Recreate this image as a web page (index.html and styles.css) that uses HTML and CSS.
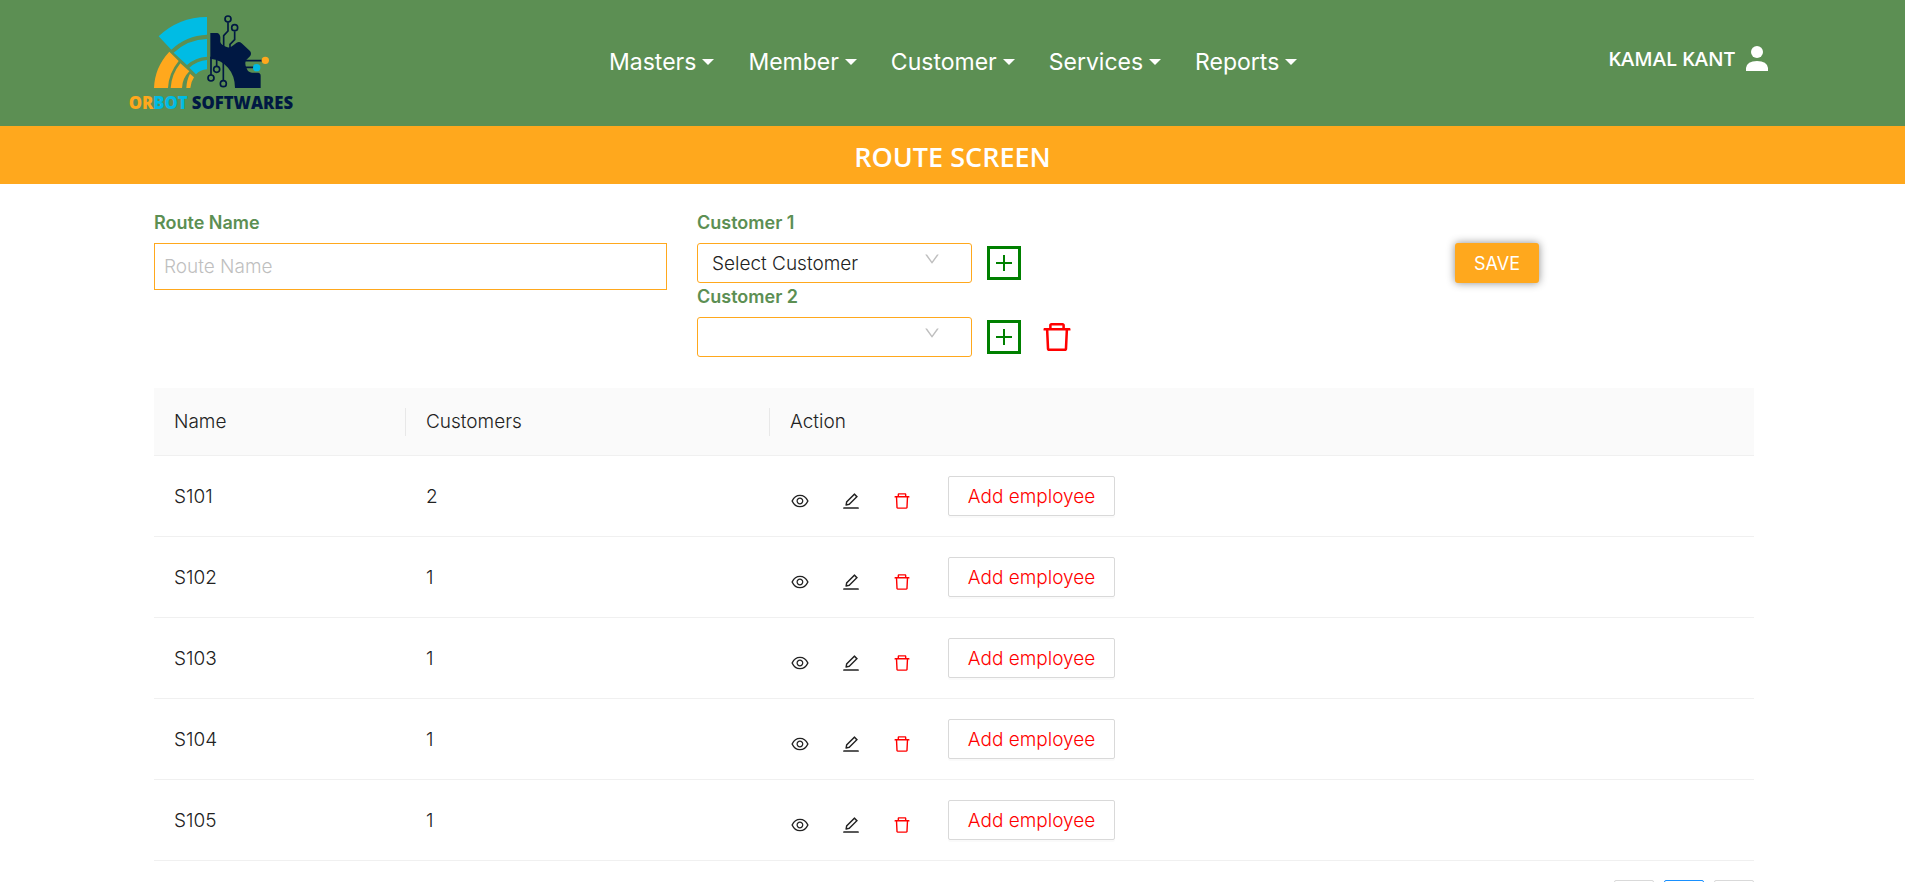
FILE: index.html
```
<!DOCTYPE html>
<html lang="en">
<head>
    <meta charset="UTF-8">
    <meta name="viewport" content="width=device-width, initial-scale=1.0">
    <title>Route Screen</title>
    <link rel="stylesheet" href="styles.css">
</head>
<body>
    <!-- shared icons -->
    <svg class="sprite" aria-hidden="true">
        <symbol id="down" viewBox="0 0 1024 1024"><path d="M884 256h-75c-5.1 0-9.9 2.5-12.9 6.6L512 654.2 227.9 262.6c-3-4.1-7.8-6.6-12.9-6.6h-75c-6.5 0-10.3 7.4-6.5 12.7l352.6 486.1c12.8 17.6 39 17.6 51.7 0l352.6-486.1c3.9-5.3.1-12.7-6.4-12.7z"/></symbol>
        <symbol id="eye" viewBox="0 0 1024 1024"><path d="M942.2 486.2C847.4 286.5 704.1 186 512 186c-192.2 0-335.4 100.5-430.2 300.3a60.3 60.3 0 000 51.5C176.6 737.5 319.9 838 512 838c192.2 0 335.4-100.5 430.2-300.3 7.7-16.2 7.7-35 0-51.5zM512 766c-161.3 0-279.4-81.8-362.7-254C232.6 339.8 350.7 258 512 258c161.3 0 279.4 81.8 362.7 254C791.5 684.2 673.4 766 512 766zm-4-430c-97.2 0-176 78.8-176 176s78.8 176 176 176 176-78.8 176-176-78.8-176-176-176zm0 288c-61.9 0-112-50.1-112-112s50.1-112 112-112 112 50.1 112 112-50.1 112-112 112z"/></symbol>
        <symbol id="edit" viewBox="0 0 1024 1024"><path d="M257.7 752c2 0 4-.2 6-.5L431.9 722c2-.4 3.9-1.3 5.3-2.8l423.9-423.9a9.96 9.96 0 000-14.1L694.9 114.9c-1.9-1.9-4.4-2.9-7.1-2.9s-5.2 1-7.1 2.9L256.8 538.8c-1.5 1.5-2.4 3.3-2.8 5.3l-29.5 168.2a33.5 33.5 0 009.4 29.8c6.6 6.4 14.9 9.9 23.8 9.9zm67.4-174.4L687.8 215l73.3 73.3-362.7 362.6-88.9 15.7 15.6-89zM880 836H144c-17.7 0-32 14.3-32 32v36c0 4.4 3.6 8 8 8h784c4.4 0 8-3.6 8-8v-36c0-17.7-14.3-32-32-32z"/></symbol>
        <symbol id="trash" viewBox="0 0 1024 1024"><path d="M360 184h-8c4.4 0 8-3.6 8-8v8h304v-8c0 4.4 3.6 8 8 8h-8v72h72v-80c0-35.3-28.7-64-64-64H352c-35.3 0-64 28.7-64 64v80h72v-72zm504 72H160c-17.7 0-32 14.3-32 32v32c0 4.4 3.6 8 8 8h60.4l24.7 523c1.6 34.1 29.8 61 63.9 61h454c34.2 0 62.3-26.8 63.9-61l24.7-523H888c4.4 0 8-3.6 8-8v-32c0-17.7-14.3-32-32-32zM731.3 840H292.7l-24.2-512h487l-24.2 512z"/></symbol>
        <symbol id="plus" viewBox="0 0 16 16"><path d="M7 0h2v7h7v2H9v7H7V9H0V7h7z"/></symbol>
        <symbol id="prev" viewBox="0 0 16 16"><path d="M11 2L5 8l6 6" fill="none" stroke="currentColor"/></symbol>
        <symbol id="next" viewBox="0 0 16 16"><path d="M5 2l6 6-6 6" fill="none" stroke="currentColor"/></symbol>
    </svg>

    <header class="navbar">
        <a href="#" class="logo" aria-label="Orbot Softwares">
            <svg viewBox="54 30 510 309">
                <g fill="#00bce4">
                    <path d="M146 109Q205 52 291 51V104Q228 107 184 149z"/>
                    <path d="M191 158Q235 118 291 117V170Q256 172 231 195z"/>
                    <path d="M238 203Q262 182 291 180V208Q270 210 258 223z"/>
                </g>
                <g fill="#ffa81d">
                    <path d="M178 155L206 183Q176 220 174 264H132Q134 202 178 155z"/>
                    <path d="M211 190L238 214Q217 235 216 264H182Q184 224 211 190z"/>
                    <path d="M240 221L252 232Q243 245 241 264H229Q230 240 240 221z"/>
                </g>
                <path fill="#001843" d="M301 99H322Q330 101 331 112V126Q334 136 348 140Q360 146 370 136L380 128Q388 123 395 130L420 153Q426 161 420 169L408 181Q403 192 410 205Q414 218 426 218H444Q452 219 452 227V264H375Q375 227 354 203Q334 179 301 176z"/>
                <g fill="none" stroke="#001843" stroke-width="5">
                    <path d="M354 67V93L341 107V140M374 94V119L360 133V146M303 170V225M320 180V198M340 180V240M405 182H456M405 202H432"/>
                    <circle cx="354" cy="57" r="9"/>
                    <circle cx="374" cy="83" r="9"/>
                    <circle cx="303" cy="234" r="9"/>
                    <circle cx="320" cy="208" r="9"/>
                    <circle cx="340" cy="251" r="9"/>
                </g>
                <circle cx="466" cy="181" r="11" fill="#ffa81d"/>
                <circle cx="440" cy="203" r="11" fill="#00bce4"/>
                <text x="56" y="326" class="logo-text"><tspan fill="#ffa81d">OR</tspan><tspan fill="#00bce4">BOT</tspan><tspan fill="#001843"> SOFTWARES</tspan></text>
            </svg>
        </a>
        <nav class="menu">
            <a href="#">Masters</a>
            <a href="#">Member</a>
            <a href="#">Customer</a>
            <a href="#">Services</a>
            <a href="#">Reports</a>
        </nav>
        <a href="#" class="user">
            <span>KAMAL KANT</span>
            <svg viewBox="0 0 22 26"><circle cx="11" cy="6" r="6"/><path d="M0 25V22Q1 15 11 15T22 22V25z"/></svg>
        </a>
    </header>

    <h1 class="title">ROUTE SCREEN</h1>

    <main class="content">
        <form class="route-form" onsubmit="return false">
            <div>
                <label for="routeName">Route Name</label>
                <input type="text" id="routeName" placeholder="Route Name">
            </div>
            <div>
                <label for="customer1">Customer 1</label>
                <div class="customer">
                    <div class="select-box">
                        <select id="customer1"><option>Select Customer</option></select>
                        <svg><use href="#down"/></svg>
                    </div>
                    <button type="button" class="add" aria-label="Add customer"><svg><use href="#plus"/></svg></button>
                </div>
                <label for="customer2">Customer 2</label>
                <div class="customer">
                    <div class="select-box">
                        <select id="customer2"><option></option></select>
                        <svg><use href="#down"/></svg>
                    </div>
                    <button type="button" class="add" aria-label="Add customer"><svg><use href="#plus"/></svg></button>
                    <button type="button" class="remove" aria-label="Remove customer"><svg><use href="#trash"/></svg></button>
                </div>
            </div>
            <div class="save-col">
                <button type="submit" class="save">SAVE</button>
            </div>
        </form>

        <table class="routes">
            <thead>
                <tr>
                    <th class="col-name"><div>Name</div></th>
                    <th class="col-customers"><div>Customers</div></th>
                    <th>Action</th>
                </tr>
            </thead>
            <tbody id="rows"></tbody>
        </table>

        <div class="pagination">
            <button type="button" aria-label="Previous page"><svg><use href="#prev"/></svg></button>
            <button type="button" class="active">1</button>
            <button type="button" aria-label="Next page"><svg><use href="#next"/></svg></button>
        </div>
    </main>

    <script>
        const routes = [
            { name: 'S101', customers: 2 },
            { name: 'S102', customers: 1 },
            { name: 'S103', customers: 1 },
            { name: 'S104', customers: 1 },
            { name: 'S105', customers: 1 }
        ];

        document.getElementById('rows').innerHTML = routes.map(route => `
            <tr>
                <td>${route.name}</td>
                <td>${route.customers}</td>
                <td>
                    <div class="actions">
                        <button type="button" class="icon" aria-label="View"><svg><use href="#eye"/></svg></button>
                        <button type="button" class="icon" aria-label="Edit"><svg><use href="#edit"/></svg></button>
                        <button type="button" class="icon red" aria-label="Delete"><svg><use href="#trash"/></svg></button>
                        <button type="button" class="employee">Add employee</button>
                    </div>
                </td>
            </tr>`).join('');
    </script>
</body>
</html>
```
FILE: styles.css
```
* {
    box-sizing: border-box;
}
body {
    margin: 0;
    font-family: Inter, sans-serif;
    font-size: 19px;
    font-weight: 300;
    color: #222;
    background: #fff;
}
button, input, select {
    font: inherit;
    color: inherit;
}
button {
    padding: 0;
    border: none;
    background: none;
    cursor: pointer;
}
svg {
    display: block;
    fill: currentColor;
}
.sprite {
    display: none;
}
.navbar {
    display: flex;
    justify-content: space-between;
    align-items: center;
    height: 126px;
    padding: 0 137px 0 128px;
    background: #5c8f53;
}
.navbar a {
    color: #fff;
    text-decoration: none;
}
.logo {
    margin-bottom: 3px;
}
.logo svg {
    width: 170px;
    height: 103px;
}
.logo-text {
    font-family: "Open Sans", sans-serif;
    font-size: 50px;
    font-weight: 800;
}
.menu {
    display: flex;
    gap: 34px;
    margin-bottom: 2px;
    font-size: 23px;
    font-weight: 400;
}
.menu a {
    display: flex;
    align-items: center;
    gap: 6px;
}
.menu a::after {
    content: "";
    border: 6px solid transparent;
    border-top-color: #fff;
    border-bottom: 0;
}
.user {
    display: flex;
    align-items: center;
    gap: 11px;
    margin-bottom: 9px;
    font-family: "Open Sans", sans-serif;
    font-size: 20px;
    font-weight: 600;
}
.user svg {
    width: 22px;
    height: 26px;
}
.title {
    margin: 0;
    padding-top: 4px;
    background: #ffa81d;
    color: #fff;
    font-family: "Open Sans", sans-serif;
    font-size: 27px;
    font-weight: 600;
    line-height: 54px;
    text-align: center;
}
.content {
    margin: 0 151px 0 154px;
    padding: 25px 0;
}
.route-form {
    display: grid;
    grid-template-columns: 513fr 728fr 299fr;
    gap: 30px;
}
.route-form label {
    display: block;
    margin-bottom: 6px;
    color: #5c8f53;
    font-size: 18px;
    font-weight: 600;
    line-height: 28px;
}
.route-form input {
    display: block;
    width: 100%;
    height: 47px;
    padding: 0 9px;
    border: 1px solid #ffa81d;
}
.route-form input::placeholder {
    color: #bfbfbf;
}
.customer {
    display: flex;
    align-items: center;
}
.select-box {
    position: relative;
    width: 275px;
}
.select-box select {
    display: block;
    width: 100%;
    height: 40px;
    padding: 0 14px;
    appearance: none;
    border: 1px solid #ffa81d;
    border-radius: 3px;
    background: #fff;
}
.select-box svg {
    position: absolute;
    top: 7px;
    right: 31px;
    width: 18px;
    height: 18px;
    fill: #bfbfbf;
    pointer-events: none;
}
.add {
    width: 34px;
    height: 34px;
    margin-left: 15px;
    border: 3px solid green;
    color: green;
}
.add svg {
    width: 16px;
    height: 16px;
    margin: auto;
}
.remove {
    margin-left: 18px;
    color: red;
}
.remove svg {
    width: 36px;
    height: 36px;
}
.save-col {
    padding-top: 34px;
}
.save {
    width: 84px;
    height: 40px;
    border-radius: 3px;
    background: #ffa81d;
    box-shadow: 0 0 8px rgba(0, 0, 0, 0.45);
    color: #fff;
    font-size: 18px;
    font-weight: 400;
}
.routes {
    width: 100%;
    margin-top: 31px;
    border-collapse: separate;
    border-spacing: 0;
    table-layout: fixed;
}
.routes th {
    height: 68px;
    padding: 0 0 0 20px;
    border-bottom: 1px solid #f0f0f0;
    background: #fafafa;
    font-weight: 300;
    line-height: 28px;
    text-align: left;
}
.routes th div {
    border-right: 1px solid #e8e8e8;
}
.col-name {
    width: 252px;
}
.col-customers {
    width: 364px;
}
.routes td {
    height: 81px;
    padding: 0 0 0 20px;
    border-bottom: 1px solid #f0f0f0;
}
.actions {
    display: flex;
    align-items: center;
    gap: 31px;
}
.icon {
    padding-top: 9px;
}
.icon svg {
    width: 20px;
    height: 20px;
}
.red {
    color: red;
}
.employee {
    width: 167px;
    height: 40px;
    margin-left: 5px;
    border: 1px solid #d9d9d9;
    border-radius: 2px;
    box-shadow: 0 2px 0 rgba(0, 0, 0, 0.02);
    color: red;
}
.pagination {
    display: flex;
    justify-content: flex-end;
    gap: 10px;
    margin-top: 19px;
}
.pagination button {
    width: 40px;
    height: 40px;
    border: 1px solid #d9d9d9;
    border-radius: 2px;
}
.pagination svg {
    width: 16px;
    height: 16px;
    margin: auto;
}
.pagination .active {
    border-color: #1890ff;
    color: #1890ff;
}
```
